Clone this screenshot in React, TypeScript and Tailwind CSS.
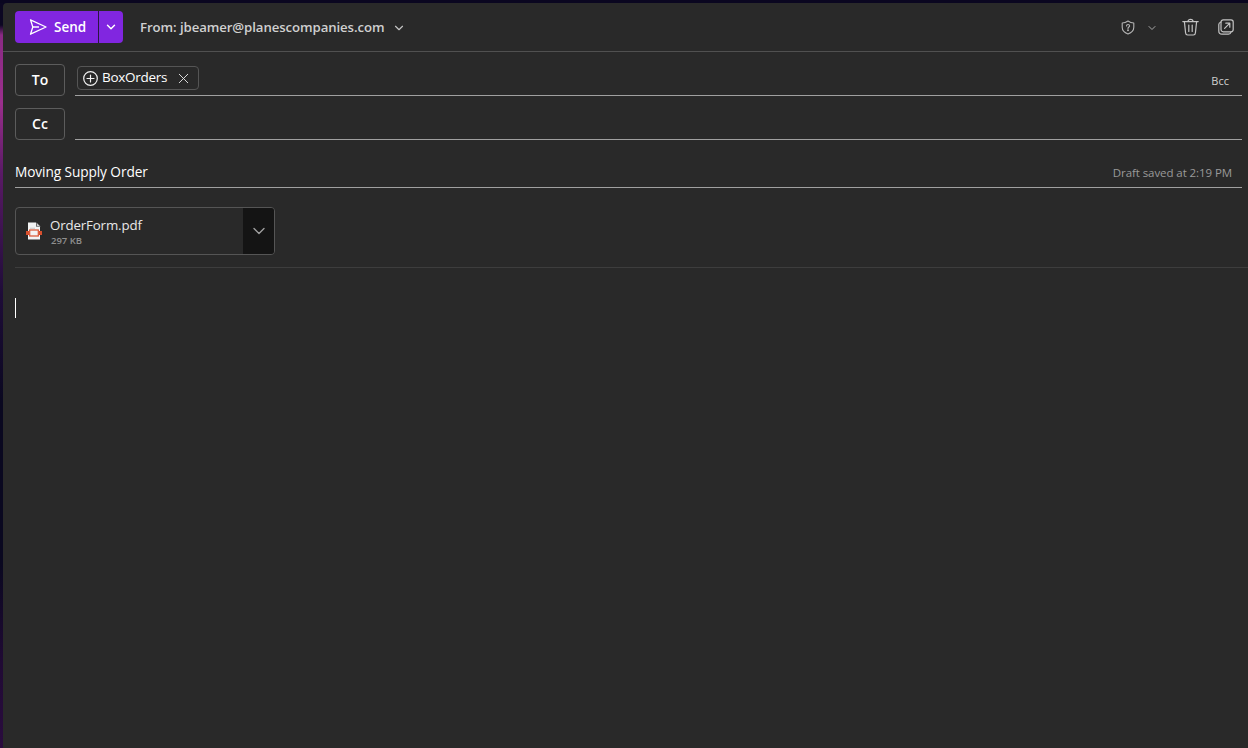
import { ChevronDown, X } from "lucide-react";

function SendIcon() {
  return (
    <svg width="18" height="18" viewBox="0 0 18 18" fill="none" stroke="currentColor" strokeWidth="1.3" strokeLinejoin="round">
      <path d="M1.5 1.8 L17 9 L1.5 16.2 L3.8 9 Z" />
      <path d="M3.8 9 H10" />
    </svg>
  );
}

function ShieldIcon() {
  return (
    <svg width="14" height="15" viewBox="0 0 14 15" fill="none" stroke="#b5b5b5" strokeWidth="1.1" strokeLinejoin="round">
      <path d="M7 1 C8.8 2.3 10.6 3 12.8 3 V7.2 C12.8 10.4 10.6 12.6 7 14 C3.4 12.6 1.2 10.4 1.2 7.2 V3 C3.4 3 5.2 2.3 7 1 Z" />
      <path d="M5.5 5.9 C5.5 4 8.6 4 8.6 5.9 C8.6 7.1 7 7 7 8.4" strokeLinecap="round" />
      <circle cx="7" cy="10.3" r="0.4" fill="#b5b5b5" />
    </svg>
  );
}

function TrashIcon() {
  return (
    <svg width="17" height="18" viewBox="0 0 17 18" fill="none" stroke="#c4c4c4" strokeWidth="1.2" strokeLinecap="round" strokeLinejoin="round">
      <path d="M0.8 3.6 H16.2" />
      <path d="M6 3.4 C6 0.8 11 0.8 11 3.4" />
      <path d="M2.4 3.8 L3.6 15 C3.7 16.2 4.5 17 5.7 17 H11.3 C12.5 17 13.3 16.2 13.4 15 L14.6 3.8" />
      <path d="M6.8 7 V13.5 M10.2 7 V13.5" />
    </svg>
  );
}

function PopOutIcon() {
  return (
    <svg width="16" height="16" viewBox="0 0 16 16" fill="none" stroke="#c4c4c4" strokeWidth="1.2" strokeLinecap="round" strokeLinejoin="round">
      <rect x="3" y="0.8" width="12.2" height="12" rx="2.2" />
      <path d="M3 3 C1.6 3.4 0.8 4.2 0.8 5.6 V12 C0.8 14 2 15.2 4 15.2 H10.5 C11.8 15.2 12.7 14.5 13 13" />
      <path d="M6.6 9.4 L11.6 4.4 M7.8 4.2 H11.8 V8.2" />
    </svg>
  );
}

function CirclePlusIcon() {
  return (
    <svg width="15" height="15" viewBox="0 0 15 15" fill="none" stroke="#f2f2f2" strokeWidth="1.2" strokeLinecap="round">
      <circle cx="7.5" cy="7.5" r="6.8" />
      <path d="M7.5 4 V11 M4 7.5 H11" />
    </svg>
  );
}

function PdfIcon() {
  return (
    <svg width="16" height="18" viewBox="0 0 16 18">
      <path d="M2 0.5 H10 L14 4.5 V17.5 H2 Z" fill="#f3f3f3" />
      <path d="M10 0.5 V4.5 H14 Z" fill="#2a2a2a" />
      <path d="M10.6 0.8 L13.8 4 H10.6 Z" fill="#cfcfcf" />
      <rect x="0" y="9" width="3" height="4" fill="#d9502e" />
      <rect x="13" y="9" width="3" height="4" fill="#d9502e" />
      <rect x="3.7" y="8" width="8.6" height="6" fill="#f3f3f3" stroke="#d9502e" strokeWidth="1.2" />
      <rect x="4" y="5.8" width="5" height="0.8" fill="#bdbdbd" />
    </svg>
  );
}

function RecipientButton({ label }: { label: string }) {
  return (
    <button className="w-[50px] h-8 shrink-0 rounded border border-[#5c5c5c] text-sm font-semibold text-white flex items-center justify-center">
      {label}
    </button>
  );
}

export default function App() {
  return (
    <div
      className="w-[1248px] h-[748px] overflow-hidden flex flex-col bg-[#0a0620]"
      style={{ fontFamily: '"Open Sans", "Noto Sans", sans-serif' }}
    >
      <div className="h-[3px] shrink-0 bg-[#0a0620]" />
      <div className="flex-1 flex min-h-0">
        {/* wallpaper showing at the left edge */}
        <div className="w-[3px] shrink-0 bg-[linear-gradient(to_bottom,#0c0722_0px,#0c0722_22px,#8a2a84_32px,#9a2f8c_100px,#5a1a66_170px,#1e0c38_290px,#0a0820_400px,#0a0820_560px,#200a34_660px,#2a0c3e_745px)]" />

        <div className="flex-1 min-w-0 bg-[#292929] rounded-tl flex flex-col">
          {/* Toolbar */}
          <div className="h-[49px] shrink-0 border-b border-[#505050] flex items-center pl-3 pr-[14px]">
            <div className="flex h-8 rounded overflow-hidden text-white">
              <button className="w-[83px] bg-[#8126e0] flex items-center gap-[7px] pl-[14px] text-[13.5px] font-semibold">
                <SendIcon />
                Send
              </button>
              <div className="w-px bg-[#2a1640]" />
              <button className="w-6 bg-[#8126e0] flex items-center justify-center">
                <ChevronDown size={14} strokeWidth={2.5} />
              </button>
            </div>
            <span className="ml-[17px] mt-px text-[13.2px] font-semibold text-[#d0d0d0] tracking-[-0.08px]">From: jbeamer@planescompanies.com</span>
            <ChevronDown size={14} className="ml-2 mt-px text-[#c4c4c4]" />

            <div className="ml-auto flex items-center">
              <ShieldIcon />
              <ChevronDown size={12} className="ml-[11px] mt-px text-[#a8a8a8]" />
              <span className="ml-[24px]"><TrashIcon /></span>
              <span className="ml-[19px]"><PopOutIcon /></span>
            </div>
          </div>

          <div className="flex-1 pl-3 min-h-0">
            {/* To */}
            <div className="flex pt-3 pr-[6px] gap-[10px]">
              <RecipientButton label="To" />
              <div className="flex-1 h-8 border-b border-[#a0a0a0] flex items-start justify-between pt-[2px]">
                <div className="ml-[2px] h-6 w-[122px] rounded border border-[#555] flex items-center pl-[5px] text-[13.5px] text-white">
                  <CirclePlusIcon />
                  <span className="ml-[4px] -mt-[2px] tracking-[-0.3px]">BoxOrders</span>
                  <X size={17} strokeWidth={1.3} className="ml-[8px] text-[#e8e8e8]" />
                </div>
                <span className="mt-[7px] mr-[13px] text-[11px] text-[#d0d0d0]">Bcc</span>
              </div>
            </div>

            {/* Cc */}
            <div className="flex pt-3 pr-[6px] gap-[10px]">
              <RecipientButton label="Cc" />
              <div className="flex-1 h-8 border-b border-[#a0a0a0]" />
            </div>

            {/* Subject */}
            <div className="mt-[15px] h-[33px] mr-[6px] border-b border-[#a0a0a0] flex items-center justify-between pt-[3px]">
              <span className="text-[13.7px] text-white tracking-[-0.1px]">Moving Supply Order</span>
              <span className="mr-[10px] text-[11.5px] text-[#999] tracking-[-0.08px]">Draft saved at 2:19 PM</span>
            </div>

            {/* Attachment */}
            <div className="mt-[19px] w-[260px] h-12 rounded border border-[#555] flex overflow-hidden">
              <div className="flex-1 flex items-center pl-[10px]">
                <PdfIcon />
                <div className="ml-[8px] flex flex-col">
                  <span className="text-[13.3px] leading-[18px] text-[#e8e8e8] tracking-[-0.15px]">OrderForm.pdf</span>
                  <span className="ml-px mt-px text-[9.5px] leading-[12px] font-semibold text-[#8f8f8f]">297 KB</span>
                </div>
              </div>
              <div className="w-[31px] bg-[#141414] flex items-center justify-center">
                <ChevronDown size={20} strokeWidth={1.6} className="text-[#a0a0a0]" />
              </div>
            </div>

            <div className="mt-3 h-px bg-[#3d3d3d]" />

            {/* Body caret */}
            <div className="mt-[30px] w-px h-5 bg-white" />
          </div>
        </div>
      </div>
    </div>
  );
}
